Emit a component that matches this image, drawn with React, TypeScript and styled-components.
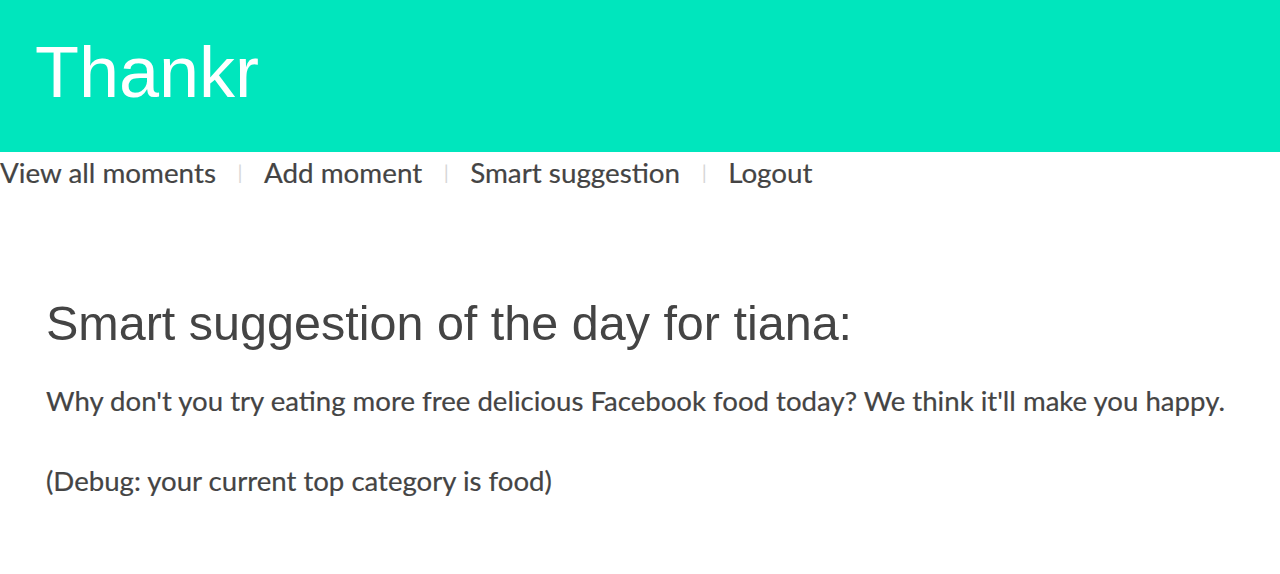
import React from "react";
import styled, { createGlobalStyle } from "styled-components";

const colors = {
  brand: "#00e6bd",
  white: "#ffffff",
  text: "#444444",
  divider: "#d6d6d6",
};

const GlobalStyle = createGlobalStyle`
  html, body {
    margin: 0;
    padding: 0;
    background: ${colors.white};
  }
`;

const Header = styled.header`
  background: ${colors.brand};
  height: 152px;
  display: flex;
  align-items: center;
  padding-left: 35px;
  box-sizing: border-box;
`;

const Logo = styled.h1`
  margin: 0;
  color: ${colors.white};
  font-family: "Liberation Sans", Arial, sans-serif;
  font-weight: normal;
  font-size: 72px;
  line-height: 1;
  padding-bottom: 8px;
`;

const Nav = styled.nav`
  display: flex;
  align-items: center;
  font-family: Lato, sans-serif;
  font-size: 27.8px;
  color: ${colors.text};
  height: 40px;
  -webkit-text-stroke: 0.2px ${colors.text};
`;

const NavLink = styled.a`
  color: ${colors.text};
  text-decoration: none;
  cursor: pointer;
`;

const Divider = styled.span`
  color: ${colors.divider};
  font-size: 20px;
  margin: 0 21.5px;
  -webkit-text-stroke: 0;
`;

const Content = styled.main`
  padding: 102px 30px 0 46px;
  color: ${colors.text};
`;

const Title = styled.h2`
  margin: 0 0 33px;
  font-family: "Liberation Sans", Arial, sans-serif;
  font-weight: normal;
  font-size: 48.5px;
  line-height: 1.2;
`;

const Text = styled.p`
  margin: 0 0 48px;
  font-family: Lato, sans-serif;
  font-size: 27.6px;
  line-height: 1.15;
  -webkit-text-stroke: 0.2px ${colors.text};
`;

const links = ["View all moments", "Add moment", "Smart suggestion", "Logout"];

const App: React.FC = () => {
  return (
    <React.Fragment>
      <GlobalStyle />
      <Header>
        <Logo>Thankr</Logo>
      </Header>
      <Nav>
        {links.map((l, i) => (
          <React.Fragment key={l}>
            {i > 0 && <Divider>|</Divider>}
            <NavLink>{l}</NavLink>
          </React.Fragment>
        ))}
      </Nav>
      <Content>
        <Title>Smart suggestion of the day for tiana:</Title>
        <Text>
          Why don't you try eating more free delicious Facebook food today? We
          think it'll make you happy.
        </Text>
        <Text>(Debug: your current top category is food)</Text>
      </Content>
    </React.Fragment>
  );
};

export default App;
